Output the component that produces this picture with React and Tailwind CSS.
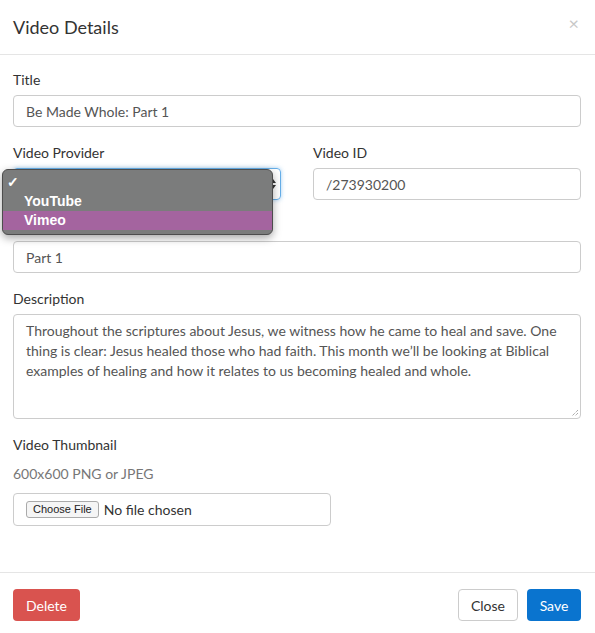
import { useState } from "react";

const inputCls =
  "w-full h-[32px] px-3 border border-[#cccccc] rounded-[4px] text-[14px] text-[#555555] bg-white flex items-center";

const Label = ({ children }) => (
  <label className="block text-[14px] leading-[20px] text-[#333333] mb-[5px]">{children}</label>
);

const App = () => {
  const [selected] = useState("Vimeo");
  const options = ["", "YouTube", "Vimeo"];

  return (
    <div
      className="w-[595px] h-[633px] bg-white flex flex-col text-[#333333]"
      style={{ fontFamily: "Lato, 'Open Sans', sans-serif" }}
    >
      {/* Header */}
      <div className="h-[55px] pl-[13px] pr-[14px] flex items-center justify-between border-b border-[#e5e5e5]">
        <h4 className="text-[18px] text-[#333333]">Video Details</h4>
        <button className="text-[#c8c8c8] text-[18px] leading-none mr-[2px] -mt-[8px]">×</button>
      </div>

      {/* Body */}
      <div className="flex-1 pl-[13px] pr-[14px] pt-[15px]">
        <div className="mb-[16px]">
          <Label>Title</Label>
          <div className={inputCls}>Be Made Whole: Part 1</div>
        </div>

        <div className="grid grid-cols-2 gap-[32px] mb-[16px]">
          <div className="relative">
            <Label>Video Provider</Label>
            <div className="w-full h-[32px] pr-[3px] border border-[#66afe9] rounded-[4px] shadow-[0_0_4px_rgba(102,175,233,0.6)] flex items-center justify-end">
              <svg width="8" height="12" viewBox="0 0 8 12" className="text-[#333]">
                <path d="M4 1 L7 5 H1 Z" fill="currentColor" />
                <path d="M4 11 L7 7 H1 Z" fill="currentColor" />
              </svg>
            </div>
            <div
              className="absolute left-[-11px] top-[26px] w-[271px] bg-[#7b7c7c] border border-[#4d4d4d] rounded-[6px] shadow-[0_3px_8px_rgba(0,0,0,0.35)] pt-[3px] pb-[4px] z-10"
              style={{ fontFamily: "'Liberation Sans', Arial, sans-serif" }}
            >
              {options.map((opt) => (
                <div
                  key={opt || "blank"}
                  className={`h-[19px] flex items-center text-[14px] font-bold text-white ${
                    opt === selected ? "bg-[#a4649f]" : ""
                  }`}
                >
                  <span className="w-[21px] pl-[4px] text-[14px]">{opt === "" ? "✓" : ""}</span>
                  <span>{opt}</span>
                </div>
              ))}
            </div>
          </div>
          <div>
            <Label>Video ID</Label>
            <div className={inputCls}>/273930200</div>
          </div>
        </div>

        <div className="mb-[16px]">
          <Label>Subtitle</Label>
          <div className={inputCls}>Part 1</div>
        </div>

        <div className="mb-[16px]">
          <Label>Description</Label>
          <div className="relative w-full h-[105px] px-3 py-[6px] border border-[#cccccc] rounded-[4px] text-[14px] leading-[20px] text-[#555555]">
            Throughout the scriptures about Jesus, we witness how he came to heal and save. One thing is clear: Jesus healed those who had faith. This month we’ll be looking at Biblical examples of healing and how it relates to us becoming healed and whole.
            <svg width="8" height="8" viewBox="0 0 8 8" className="absolute right-[1px] bottom-[1px]">
              <path d="M7 1 L1 7 M7 4 L4 7" stroke="#888" strokeWidth="1" strokeDasharray="1 1" />
            </svg>
          </div>
        </div>

        <div>
          <Label>Video Thumbnail</Label>
          <p className="text-[14px] leading-[20px] text-[#777777] mt-[9px] mb-[9px]">600x600 PNG or JPEG</p>
          <div className="w-[318px] h-[33px] px-3 border border-[#cccccc] rounded-[4px] flex items-center gap-[5px]">
            <span
              className="h-[17px] px-[6px] border border-[#aaaaaa] rounded-[3px] bg-[#f5f5f5] text-[11px] leading-[15px] text-[#222]"
              style={{ fontFamily: "'Liberation Sans', Arial, sans-serif" }}
            >
              Choose File
            </span>
            <span className="text-[14px] text-[#333]">No file chosen</span>
          </div>
        </div>
      </div>

      {/* Footer */}
      <div className="h-[61px] pl-[13px] pr-[14px] border-t border-[#e5e5e5] flex items-start pt-[16px] justify-between">
        <button className="h-[32px] w-[67px] rounded-[4px] bg-[#d9534f] text-white text-[14px]">Delete</button>
        <div className="flex gap-[9px]">
          <button className="h-[32px] w-[60px] rounded-[4px] bg-white border border-[#cccccc] text-[#333] text-[14px]">Close</button>
          <button className="h-[32px] w-[54px] rounded-[4px] bg-[#0a74cf] text-white text-[14px]">Save</button>
        </div>
      </div>
    </div>
  );
};

export default App;
